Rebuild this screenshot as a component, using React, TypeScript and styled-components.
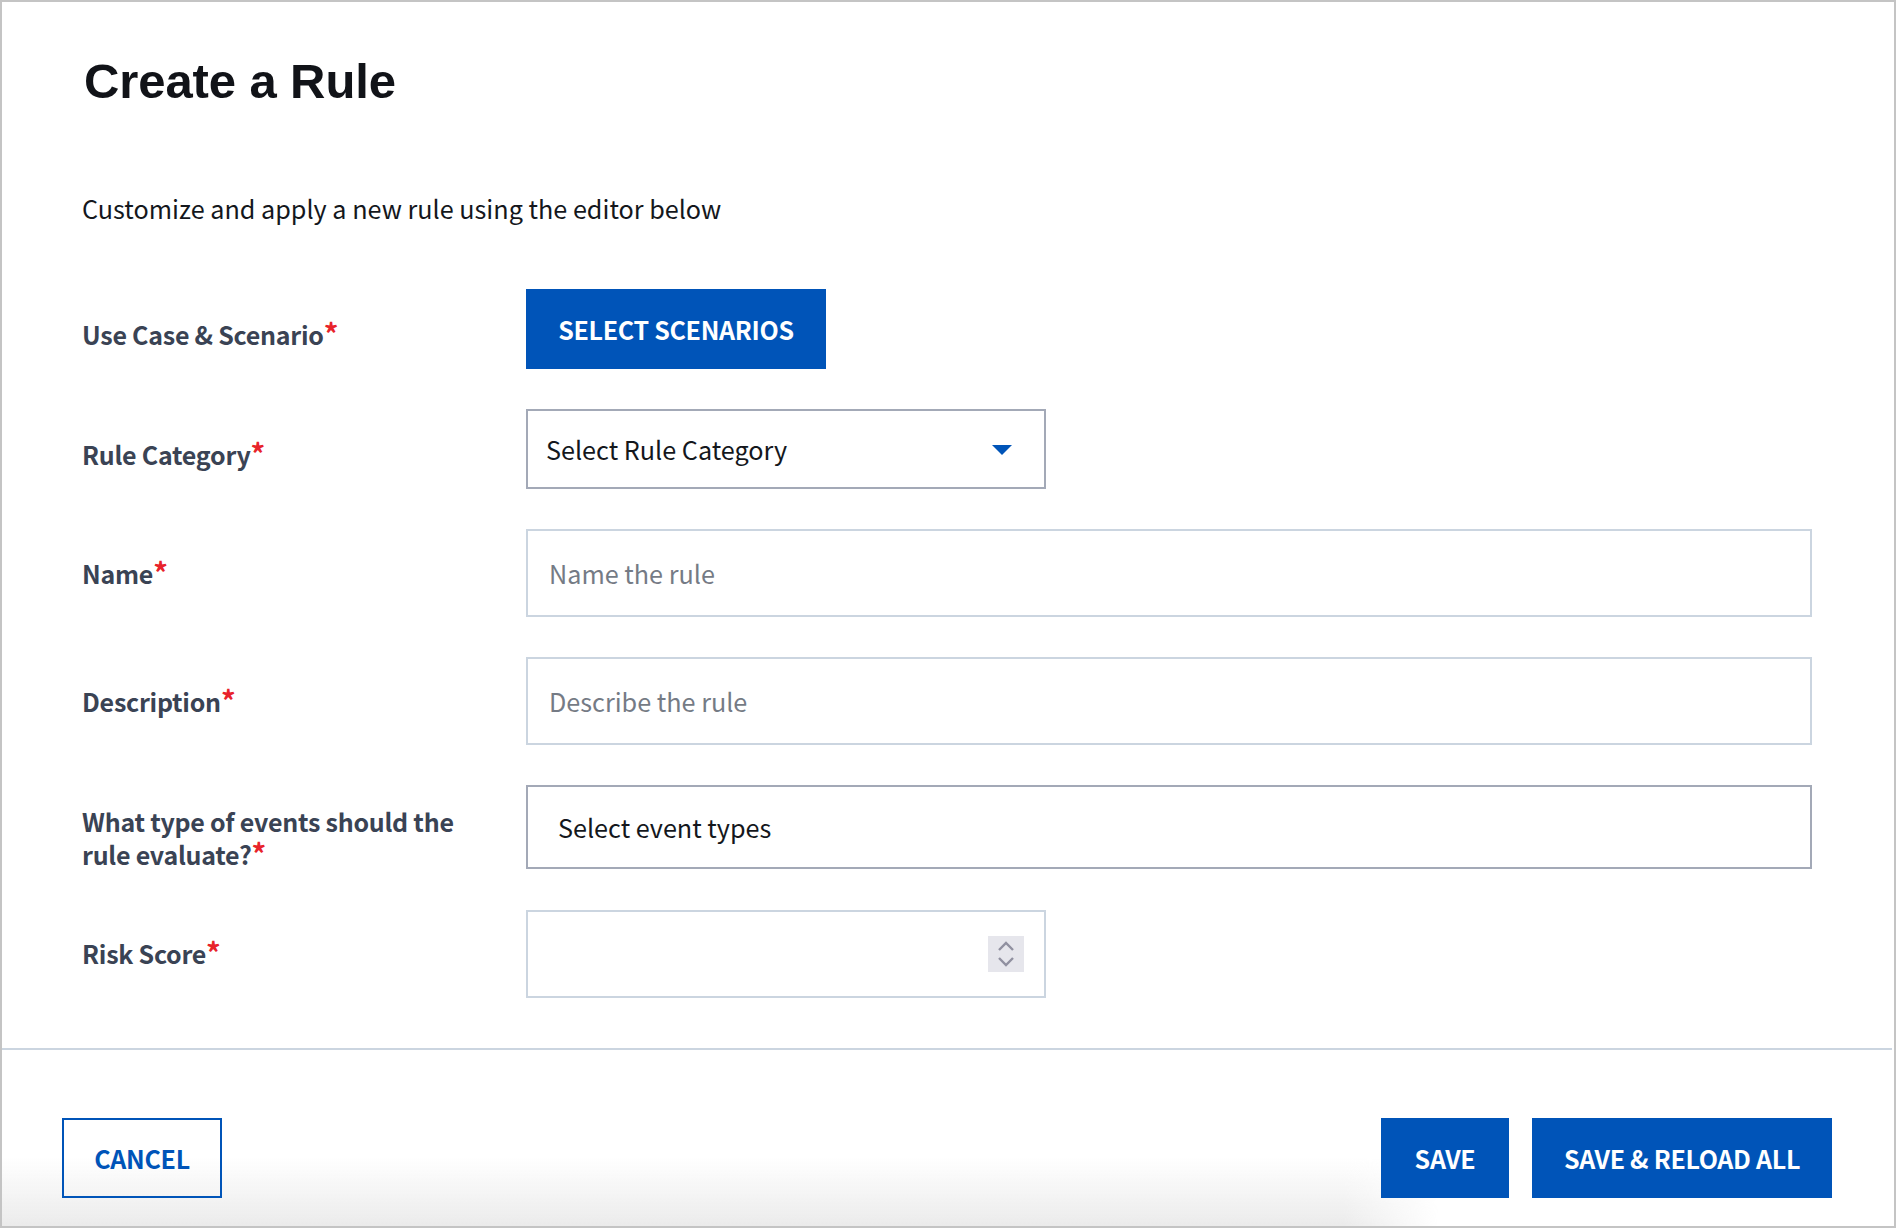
import React from 'react'
import styled, {createGlobalStyle} from 'styled-components'

const GlobalStyle = createGlobalStyle`
  html, body {
    margin: 0;
    padding: 0;
    background: #fff;
  }

  * {
    box-sizing: border-box;
  }
`

const bodyFont = `"Noto Sans CJK SC", "Source Sans Pro", "Noto Sans", sans-serif`
const blue = '#0054b8'

const Panel = styled.div`
  width: 1896px;
  height: 1228px;
  border: 2px solid #c4c4c4;
  display: flex;
  flex-direction: column;
  font-family: ${bodyFont};
  background: #fff;
`

const Main = styled.main`
  flex: 1;
  padding: 50px 82px 0 80px;
`

const Title = styled.h1`
  margin: 0 0 0 2px;
  font-family: "Liberation Sans", Arial, sans-serif;
  font-size: 49px;
  line-height: 58px;
  font-weight: 700;
  letter-spacing: -0.1px;
  color: #111318;
`

const Intro = styled.p`
  margin: 80px 0 0;
  font-size: 25.2px;
  line-height: 36px;
  color: #14171c;
`

const Form = styled.form`
  margin-top: 63px;
  display: flex;
  flex-direction: column;
  gap: 40px;
`

const Row = styled.div`
  display: grid;
  grid-template-columns: 444px 1fr;
`

const Label = styled.label<{$top: number}>`
  padding-top: ${p => p.$top}px;
  font-size: 25px;
  line-height: 33px;
  font-weight: 600;
  letter-spacing: -0.25px;
  color: #3a4354;
`

const EventsLabel = styled(Label)`
  margin-bottom: -1px;
`

const Required = styled.span`
  color: #e8232b;
  font-size: 29px;
  line-height: 0;
  &::after {
    content: '*';
  }
`

const Button = styled.button<{$outline?: boolean}>`
  height: 80px;
  padding: 0;
  border: 2px solid ${blue};
  background: ${p => (p.$outline ? 'transparent' : blue)};
  color: ${p => (p.$outline ? blue : '#fff')};
  font-family: ${bodyFont};
  font-size: 25px;
  font-weight: 700;
  line-height: 32px;
  letter-spacing: -0.3px;
  text-transform: uppercase;
  white-space: nowrap;
`

const ScenarioButton = styled(Button)`
  width: 300px;
  display: block;
`

const SelectBox = styled.button`
  width: 520px;
  height: 80px;
  padding: 0 20px 0 18px;
  display: flex;
  align-items: center;
  justify-content: space-between;
  background: #fff;
  border: 2px solid #a3a9b7;
  font-family: ${bodyFont};
  font-size: 25.2px;
  color: #14171c;
`

const Caret = styled.span`
  margin: 2px 12px 0 0;
  width: 0;
  height: 0;
  border-left: 10px solid transparent;
  border-right: 10px solid transparent;
  border-top: 10px solid ${blue};
`

const TextInput = styled.input`
  width: 100%;
  height: 88px;
  padding: 0 21px;
  border: 2px solid #cbd5e0;
  outline: none;
  background: #fff;
  font-family: ${bodyFont};
  font-size: 25.2px;
  color: #14171c;

  &::placeholder {
    color: #757b85;
    opacity: 1;
  }
`

const MultiSelect = styled.div`
  height: 84px;
  padding: 0 30px;
  display: flex;
  align-items: center;
  border: 2px solid #a3a9b7;
  font-size: 25.2px;
  color: #14171c;
`

const NumberBox = styled.div`
  width: 520px;
  height: 88px;
  padding-right: 20px;
  display: flex;
  align-items: center;
  justify-content: flex-end;
  border: 2px solid #cbd5e0;
`

const Spinner = styled.div`
  width: 36px;
  height: 36px;
  background: #e6e6ec;
  display: flex;
  align-items: center;
  justify-content: center;
`

const Footer = styled.footer`
  position: relative;
  height: 178px;
  margin-right: 2px;
  padding: 68px 60px 0 60px;
  display: flex;
  justify-content: space-between;
  border-top: 2px solid #cbd5e0;

  &::before {
    content: '';
    position: absolute;
    left: 0;
    right: 0;
    bottom: 0;
    height: 68px;
    background: linear-gradient(to top, #ebebeb, rgba(238, 238, 238, 0));
    -webkit-mask-image: linear-gradient(to right, #000 71%, transparent 76%);
    mask-image: linear-gradient(to right, #000 71%, transparent 76%);
  }
`

const FooterGroup = styled.div`
  position: relative;
  display: flex;
  gap: 23px;
`

const CancelButton = styled(Button)`
  position: relative;
  width: 160px;
`

const SaveButton = styled(Button)`
  width: 128px;
`

const SaveAllButton = styled(Button)`
  width: 300px;
`

export default function App() {
  return <>
    <GlobalStyle/>
    <Panel>
      <Main>
        <Title>Create a Rule</Title>
        <Intro>Customize and apply a new rule using the editor below</Intro>
        <Form onSubmit={(e) => e.preventDefault()}>
          <Row>
            <Label $top={29}>Use Case &amp; Scenario<Required/></Label>
            <ScenarioButton type="button">Select Scenarios</ScenarioButton>
          </Row>
          <Row>
            <Label $top={29}>Rule Category<Required/></Label>
            <SelectBox type="button">
              Select Rule Category
              <Caret/>
            </SelectBox>
          </Row>
          <Row>
            <Label $top={28}>Name<Required/></Label>
            <TextInput placeholder="Name the rule"/>
          </Row>
          <Row>
            <Label $top={28}>Description<Required/></Label>
            <TextInput placeholder="Describe the rule"/>
          </Row>
          <Row>
            <EventsLabel $top={20}>What type of events should the<br/>rule evaluate?<Required/></EventsLabel>
            <MultiSelect>Select event types</MultiSelect>
          </Row>
          <Row>
            <Label $top={27}>Risk Score<Required/></Label>
            <NumberBox>
              <Spinner>
                <svg width="16" height="26" viewBox="0 0 16 26" fill="none" stroke="#9090a0" strokeWidth="2.4">
                  <path d="M1 9l7-7 7 7"/>
                  <path d="M1 17l7 7 7-7"/>
                </svg>
              </Spinner>
            </NumberBox>
          </Row>
        </Form>
      </Main>
      <Footer>
        <CancelButton type="button" $outline>Cancel</CancelButton>
        <FooterGroup>
          <SaveButton type="button">Save</SaveButton>
          <SaveAllButton type="button">Save &amp; Reload All</SaveAllButton>
        </FooterGroup>
      </Footer>
    </Panel>
  </>
}
